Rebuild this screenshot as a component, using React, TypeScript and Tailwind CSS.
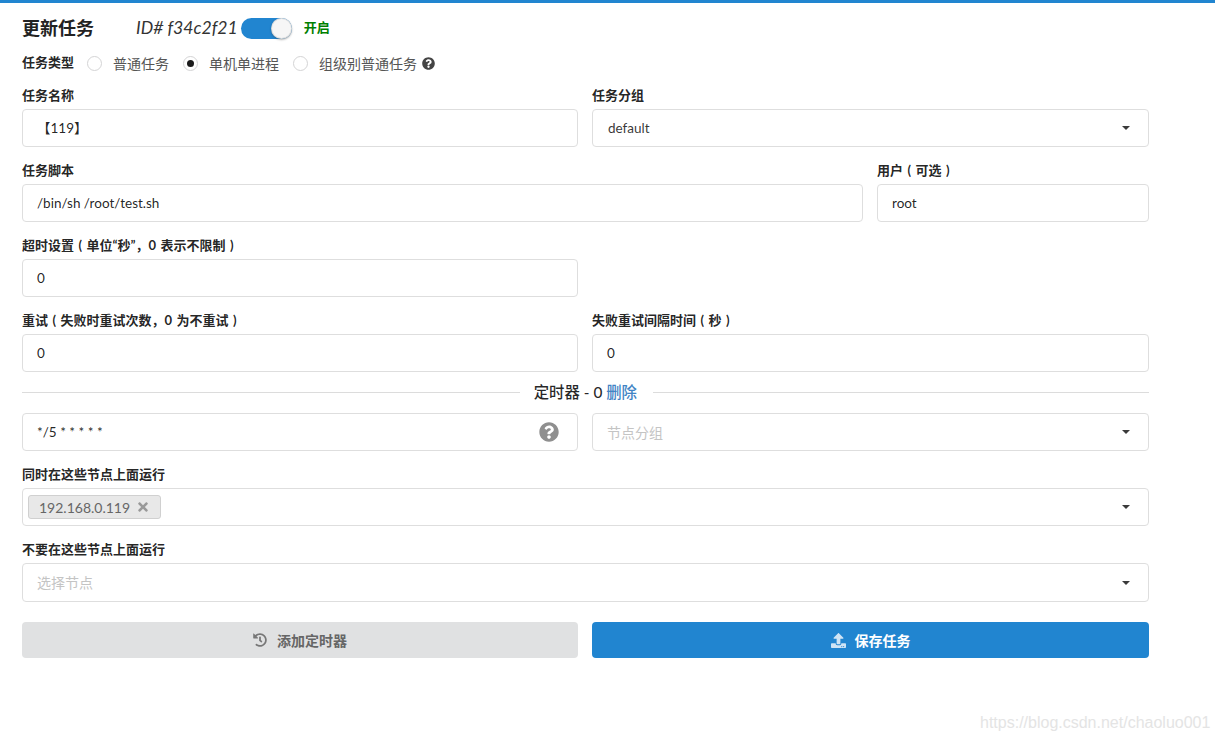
import React from 'react';
import { FaQuestionCircle, FaHistory, FaUpload, FaTimes } from 'react-icons/fa';

const Caret = () => (
  <span className="ml-auto h-0 w-0 border-x-[4px] border-t-[4px] border-x-transparent border-t-[#3a3a3a]" />
);

const Label = ({ children }: { children: React.ReactNode }) => (
  <label className="mb-[6px] block h-[15px] text-[13px] leading-[15px] font-bold [word-spacing:1.3px] text-[rgba(0,0,0,0.87)]">{children}</label>
);

const Input = ({ value, children }: { value: string; children?: React.ReactNode }) => (
  <div className="flex h-[38px] items-center rounded-[4px] border border-[#dedede] bg-white pr-[17px] pl-[14px] text-[13.5px] text-[rgba(0,0,0,0.87)]">
    <span className="whitespace-pre">{value}</span>
    {children}
  </div>
);

const Select = ({ value, placeholder }: { value: string; placeholder?: boolean }) => (
  <div className="flex h-[38px] items-center rounded-[4px] border border-[#dedede] bg-white pr-[18px] pl-[14px] text-[14px]">
    <span className={placeholder ? 'text-[#c4c4c4]' : 'ml-px text-[13.5px] text-[rgba(0,0,0,0.8)]'}>{value}</span>
    <Caret />
  </div>
);

const Radio = ({ label, checked }: { label: string; checked?: boolean }) => (
  <div className="flex items-center">
    <span className="flex h-[15px] w-[15px] items-center justify-center rounded-full border border-[#d4d4d5] bg-white">
      {checked && <span className="h-[7px] w-[7px] rounded-full bg-[#1b1b1b]" />}
    </span>
    <span className="ml-[11px] text-[14px] text-[#555]">{label}</span>
  </div>
);

export default function App() {
  return (
    <div
      className="relative h-[742px] w-[1215px] overflow-hidden border-t-[3px] border-[#2185d0] bg-white"
      style={{ fontFamily: 'Lato, "Noto Sans CJK SC", sans-serif' }}
    >
      <div className="w-[1149px] pl-[22px]">
        {/* 标题 */}
        <div className="mt-[11px] flex h-[26px] items-center pt-[2px]">
          <h2 className="w-[114px] text-[18px] font-bold text-[#222]">更新任务</h2>
          <span className="text-[17.6px] text-[#333] italic">ID# f34c2f21</span>
          <span className="relative ml-[3px] block h-[21px] w-[51px] rounded-full bg-[#2185d0]">
            <span className="absolute top-0 right-0 h-[21px] w-[21px] rounded-full bg-[#f6f6f6] shadow-[0_1px_2px_rgba(34,36,38,0.35),inset_0_0_0_1px_rgba(34,36,38,0.12)]" />
          </span>
          <span className="ml-[12px] text-[13px] font-bold text-[#008000]">开启</span>
        </div>

        {/* 任务类型 */}
        <div className="mt-[13px] flex h-[20px] items-center">
          <span className="mr-[13px] text-[13px] font-bold text-[rgba(0,0,0,0.87)]">任务类型</span>
          <div className="flex items-center gap-[14px]">
            <Radio label="普通任务" />
            <Radio label="单机单进程" checked />
            <div className="flex items-center">
              <Radio label="组级别普通任务" />
              <FaQuestionCircle className="ml-[5px] text-[13px] text-[#444]" />
            </div>
          </div>
        </div>

        {/* 表单 */}
        <div className="mt-[15px] flex flex-col">
          <div className="grid grid-cols-[556px_557px] gap-x-[14px]">
            <div>
              <Label>任务名称</Label>
              <Input value="【119】" />
            </div>
            <div>
              <Label>任务分组</Label>
              <Select value="default" />
            </div>
          </div>

          <div className="mt-[16px] grid grid-cols-[841px_272px] gap-x-[14px]">
            <div>
              <Label>任务脚本</Label>
              <Input value="/bin/sh /root/test.sh" />
            </div>
            <div>
              <Label>用户 ( 可选 )</Label>
              <Input value="root" />
            </div>
          </div>

          <div className="mt-[16px] grid grid-cols-[556px_557px] gap-x-[14px]">
            <div>
              <Label>超时设置 ( 单位“秒”，0 表示不限制 )</Label>
              <Input value="0" />
            </div>
          </div>

          <div className="mt-[16px] grid grid-cols-[556px_557px] gap-x-[14px]">
            <div>
              <Label>重试 ( 失败时重试次数，0 为不重试 )</Label>
              <Input value="0" />
            </div>
            <div>
              <Label>失败重试间隔时间 ( 秒 )</Label>
              <Input value="0" />
            </div>
          </div>

          {/* 定时器分隔线 */}
          <div className="mt-[11px] flex h-[19px] items-center">
            <span className="h-px flex-1 bg-[#dcdcdc]" />
            <span className="pr-[16px] pl-[14px] text-[15.4px] font-medium text-[rgba(0,0,0,0.85)]">
              定时器 - 0 <span className="text-[#4183c4]">删除</span>
            </span>
            <span className="h-px w-[496px] bg-[#dcdcdc]" />
          </div>

          <div className="mt-[11px] grid grid-cols-[556px_557px] gap-x-[14px]">
            <Input value="*/5 * * * * *">
              <FaQuestionCircle className="mr-[1px] ml-auto text-[20px] text-[#8f8f8f]" />
            </Input>
            <Select value="节点分组" placeholder />
          </div>

          <div className="mt-[16px]">
            <Label>同时在这些节点上面运行</Label>
            <div className="flex h-[38px] items-center rounded-[4px] border border-[#dedede] bg-white pr-[18px] pl-[5px]">
              <span className="flex h-[24px] items-center rounded-[3px] border border-[#d0d0d0] bg-[#e8e8e8] pr-[10px] pl-[10px] text-[14px] text-[#666]">
                192.168.0.119
                <FaTimes className="ml-[6px] text-[14px] text-[#999]" />
              </span>
              <Caret />
            </div>
          </div>

          <div className="mt-[16px]">
            <Label>不要在这些节点上面运行</Label>
            <div className="h-[39px] [&>div]:h-[39px]">
              <Select value="选择节点" placeholder />
            </div>
          </div>

          <div className="mt-[20px] grid grid-cols-[556px_557px] gap-x-[14px]">
            <button className="flex h-[36px] items-center justify-center rounded-[4px] bg-[#e0e1e2] text-[14px] font-bold text-[#666]">
              <FaHistory className="mr-[10px] text-[14px] text-[#777]" />
              添加定时器
            </button>
            <button className="flex h-[36px] items-center justify-center rounded-[4px] bg-[#2185d0] text-[14px] font-bold text-white">
              <FaUpload className="mr-[9px] text-[15px] text-[#cfe4f5]" />
              保存任务
            </button>
          </div>
        </div>
      </div>

      {/* 水印 */}
      <span
        className="absolute top-[710px] left-[980px] text-[16px] leading-[20px] whitespace-nowrap text-[#e4e4e4]"
        style={{ fontFamily: '"Liberation Sans", sans-serif' }}
      >
        https://blog.csdn.net/chaoluo001
      </span>
    </div>
  );
}
